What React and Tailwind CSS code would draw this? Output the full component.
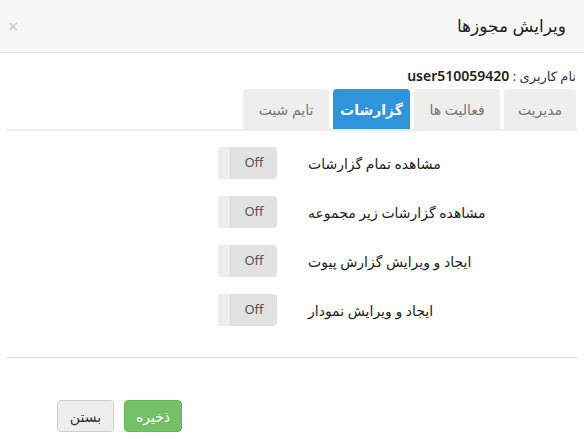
import React from "react";

const font = { fontFamily: '"Noto Sans", "DejaVu Sans", sans-serif' };

function Toggle() {
  return (
    <div className="flex h-[32px] w-[59px] overflow-hidden rounded-[4px] bg-[#e2e2e2]" dir="ltr">
      <div className="h-full w-[13px] bg-[#ececec] border-r border-[#d8d8d8]" />
      <div className="flex flex-1 items-center justify-center text-[13px] text-[#555]">Off</div>
    </div>
  );
}

function Row({ label }) {
  return (
    <div className="flex h-[32px] items-center pl-[211px]" dir="ltr">
      <Toggle />
      <div dir="rtl" className="ml-[31px] text-[14px] text-[#222]">{label}</div>
    </div>
  );
}

export default function App() {
  const tabs = [
    { t: "مدیریت", w: "w-[72px]" },
    { t: "فعالیت ها", w: "w-[86px]" },
    { t: "گزارشات", w: "w-[77px]", active: true },
    { t: "تایم شیت", w: "w-[86px]" },
  ];
  return (
    <div dir="rtl" style={font} className="w-[584px] h-[439px] bg-white text-[#333] overflow-hidden">
      <div className="flex h-[53px] items-center justify-between border-b border-[#e5e5e5] bg-[#f7f7f7] pr-[18px] pl-[8px]">
        <div className="text-[17px] text-[#222]">ویرایش مجوزها</div>
        <div className="text-[18px] leading-none text-[#c8c8c8]">×</div>
      </div>
      <div className="px-[7px]">
        <div className="mt-[14px] h-[18px] pr-[1px] text-[13px] leading-[18px] text-[#333]">
          نام کاربری : <span className="text-[14px] font-semibold text-[#222]">user510059420</span>
        </div>
        <div className="mt-[4px] flex gap-[4px] border-b-2 border-[#ececec] pr-[1px]">
          {tabs.map((x) => (
            <div
              key={x.t}
              className={`${x.w} flex h-[40px] items-center justify-center rounded-t-[4px] text-[14px] ${
                x.active ? "bg-[#2e95dc] font-bold text-white" : "bg-[#eeeeee] text-[#777]"
              }`}
            >
              {x.t}
            </div>
          ))}
        </div>
        <div className="mt-[16px] flex flex-col gap-[17px]">
          <Row label="مشاهده تمام گزارشات" />
          <Row label="مشاهده گزارشات زیر مجموعه" />
          <Row label="ایجاد و ویرایش گزارش پیوت" />
          <Row label="ایجاد و ویرایش نمودار" />
        </div>
        <div className="mt-[31px] border-t border-[#dddddd]" />
      </div>
      <div className="mt-[42px] flex justify-end gap-[10px] pl-[57px]">
        <div className="flex h-[32px] w-[58px] items-center justify-center rounded-[4px] border border-[#6bb65c] bg-[#74c065] text-[14px] text-white">
          ذخیره
        </div>
        <div className="flex h-[32px] w-[57px] items-center justify-center rounded-[4px] border border-[#d0d0d0] bg-[#eeeeee] text-[14px] text-[#333]">
          بستن
        </div>
      </div>
    </div>
  );
}
